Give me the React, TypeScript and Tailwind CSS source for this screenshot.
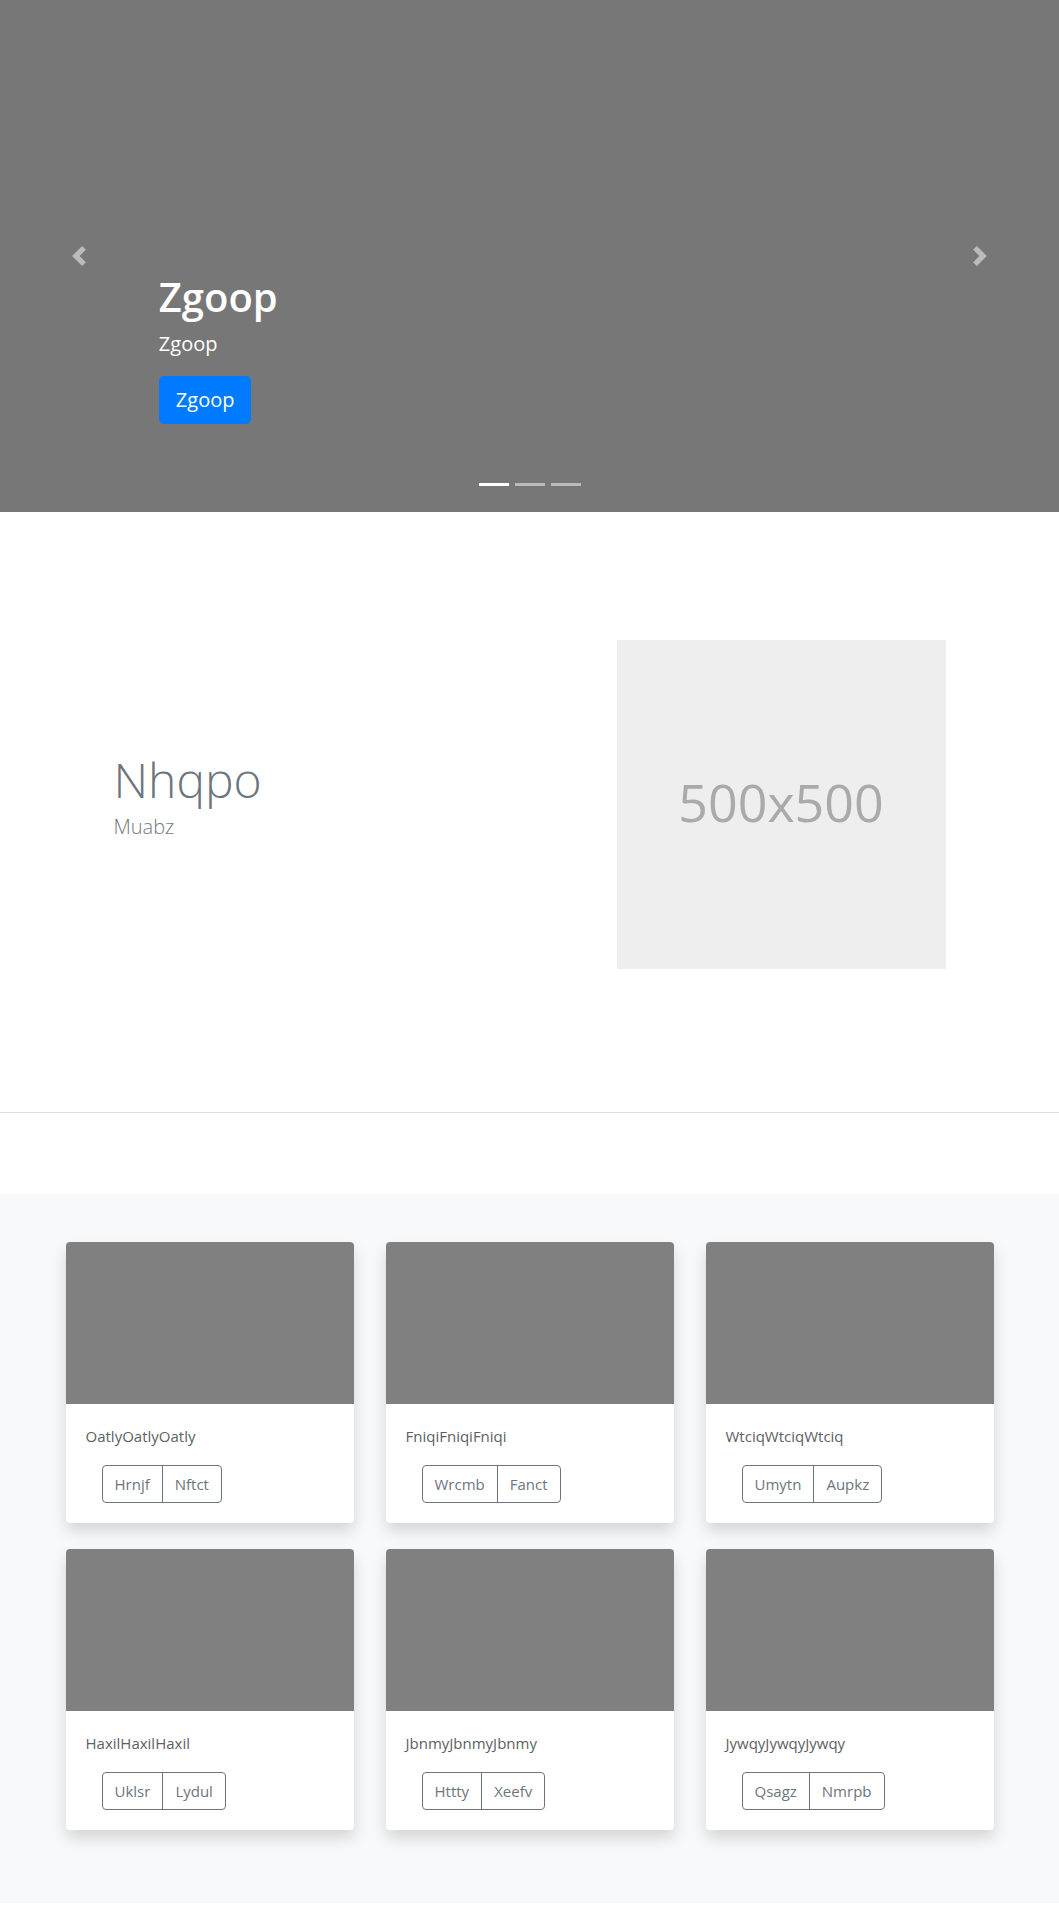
import React from 'react';

const cards = [
  { title: 'OatlyOatlyOatly', tags: ['Hrnjf', 'Nftct'] },
  { title: 'FniqiFniqiFniqi', tags: ['Wrcmb', 'Fanct'] },
  { title: 'WtciqWtciqWtciq', tags: ['Umytn', 'Aupkz'] },
  { title: 'HaxilHaxilHaxil', tags: ['Uklsr', 'Lydul'] },
  { title: 'JbnmyJbnmyJbnmy', tags: ['Httty', 'Xeefv'] },
  { title: 'JywqyJywqyJywqy', tags: ['Qsagz', 'Nmrpb'] },
];

const Chevron = ({ dir }: { dir: 'prev' | 'next' }) => (
  <svg width="20" height="20" viewBox="0 0 8 8" fill="#fff">
    <path
      d={
        dir === 'prev'
          ? 'M5.25 0l-4 4 4 4 1.5-1.5-2.5-2.5 2.5-2.5-1.5-1.5z'
          : 'M2.75 0l-1.5 1.5 2.5 2.5-2.5 2.5 1.5 1.5 4-4-4-4z'
      }
    />
  </svg>
);

const Hero = () => (
  <section className="relative h-[512px] bg-[#777777] text-white">
    <div className="pl-[15%] pt-[273px]">
      <h1 className="text-[40px] leading-[48px] font-semibold mb-[8px]">Zgoop</h1>
      <p className="text-[20px] leading-[30px] mb-[17px]">Zgoop</p>
      <button className="bg-[#007bff] text-white text-[20px] leading-[30px] px-[16px] py-[8px] border border-[#007bff] rounded-[5px]">
        Zgoop
      </button>
    </div>
    <a className="absolute left-0 top-0 bottom-0 w-[15%] flex items-center justify-center opacity-50">
      <Chevron dir="prev" />
    </a>
    <a className="absolute right-0 top-0 bottom-0 w-[15%] flex items-center justify-center opacity-50">
      <Chevron dir="next" />
    </a>
    <ol className="absolute left-0 right-0 bottom-[26px] flex justify-center gap-x-[6px]">
      <li className="w-[30px] h-[3px] bg-white" />
      <li className="w-[30px] h-[3px] bg-white opacity-50" />
      <li className="w-[30px] h-[3px] bg-white opacity-50" />
    </ol>
  </section>
);

const Feature = () => (
  <section className="h-[601px] border-b border-[#dedede]">
    <div className="w-[930px] mx-auto grid grid-cols-2">
      <div className="pt-[238px] pl-[49px] text-[#6c757d] font-light">
        <h2 className="text-[48px] leading-[60px]">Nhqpo</h2>
        <p className="text-[20px] leading-[28px] mt-[3px] text-[#73787d]">Muabz</p>
      </div>
      <div className="pt-[128px] pr-[49px] flex justify-end">
        <div className="w-[329px] h-[329px] bg-[#eeeeee] flex items-center justify-center text-[#aaaaaa] text-[52px] pb-[6px]">
          500x500
        </div>
      </div>
    </div>
  </section>
);

const Card = ({ title, tags }: { title: string; tags: string[] }) => (
  <article className="bg-white rounded-[4px] shadow-[0_8px_16px_rgba(0,0,0,0.15)] overflow-hidden">
    <div className="h-[162px] bg-[#808080]" />
    <div className="p-[20px]">
      <p className="text-[15px] leading-[24px] text-[#5c5f63] mb-[17px]">{title}</p>
      <div className="ml-[16px] inline-flex border border-[#6c757d] rounded-[4px] text-[#6c757d] text-[15px] leading-[24px]">
        {tags.map((tag, i) => (
          <span
            key={tag}
            className={i > 0 ? 'px-[12px] py-[6px] border-l border-[#6c757d]' : 'px-[12px] py-[6px]'}
          >
            {tag}
          </span>
        ))}
      </div>
    </div>
  </article>
);

export default function App() {
  return (
    <div className="font-['Open_Sans',sans-serif] bg-white min-h-[1920px]">
      <Hero />
      <Feature />
      <div className="h-[81px]" />
      <section className="bg-[#f8f9fa] pt-[48px] pb-[73px]">
        <div className="w-[928px] mx-auto grid grid-cols-3 gap-x-[32px] gap-y-[26px]">
          {cards.map((c) => (
            <Card key={c.title} {...c} />
          ))}
        </div>
      </section>
    </div>
  );
}
